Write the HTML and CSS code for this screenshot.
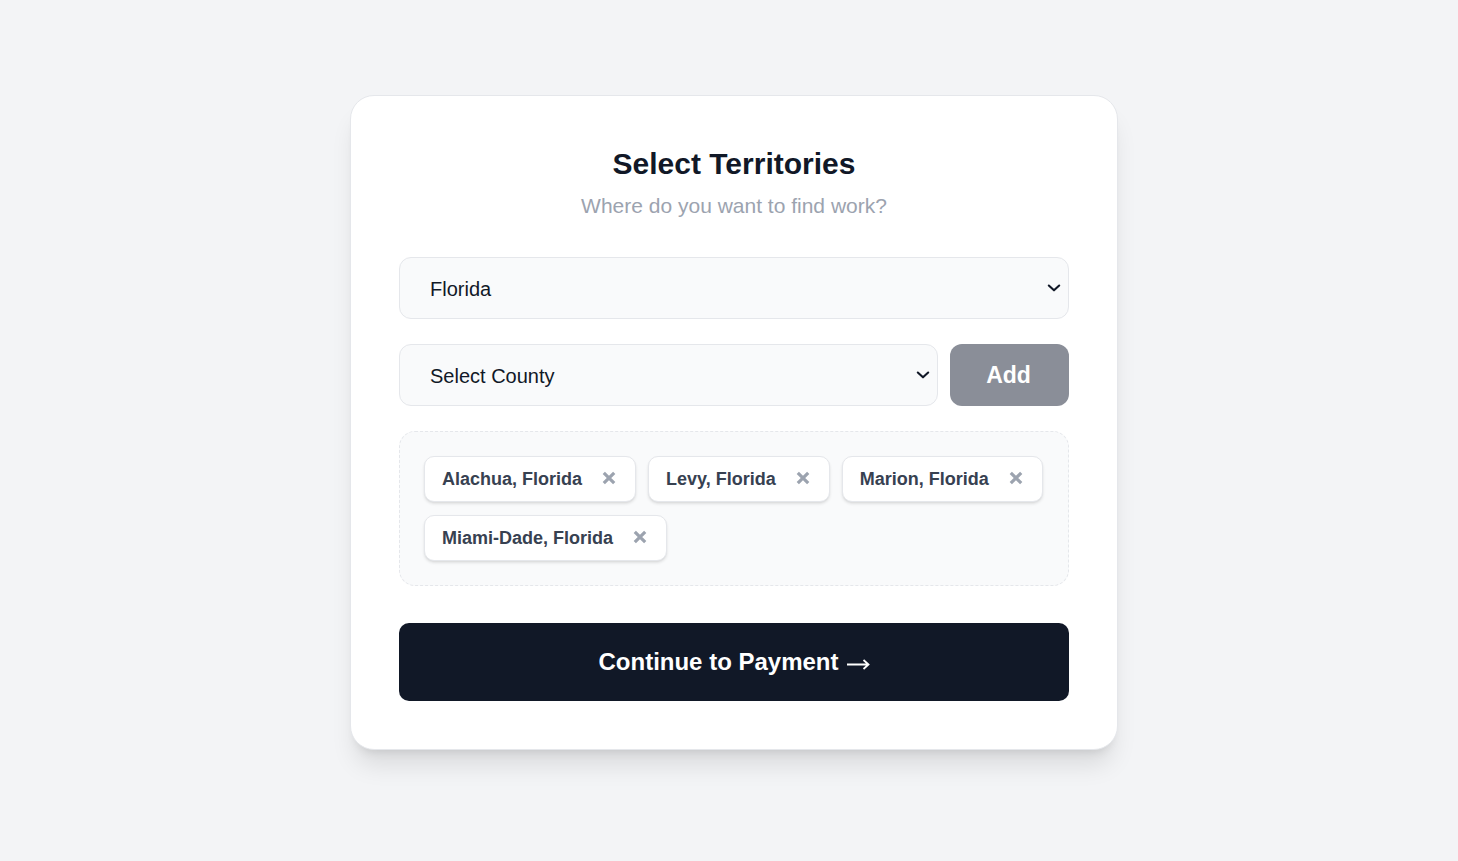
FILE: index.html
```html
<!DOCTYPE html>
<html lang="en">
<head>
<meta charset="utf-8">
<title>Select Territories</title>
<link rel="stylesheet" href="styles.css">
</head>
<body>
<main class="page">
  <section class="card">
    <header class="head">
      <h1 class="title">Select Territories</h1>
      <p class="subtitle">Where do you want to find work?</p>
    </header>

    <div class="field field-state">
      <span class="field-value">Florida</span>
      <svg class="chev" width="14" height="8" viewBox="0 0 14 8"><path d="M1.8 1.5 L7 6.3 L12.2 1.5" fill="none" stroke="#111827" stroke-width="2.1" stroke-linecap="round" stroke-linejoin="round"/></svg>
    </div>

    <div class="row">
      <div class="field field-county">
        <span class="field-value">Select County</span>
        <svg class="chev" width="14" height="8" viewBox="0 0 14 8"><path d="M1.8 1.5 L7 6.3 L12.2 1.5" fill="none" stroke="#111827" stroke-width="2.1" stroke-linecap="round" stroke-linejoin="round"/></svg>
      </div>
      <button class="add-btn" type="button">Add</button>
    </div>

    <div class="tags">
      <div class="tag"><span class="tag-text">Alachua, Florida</span><svg class="x" width="14" height="14" viewBox="0 0 14 14"><path d="M1.8 1.8 L12.2 12.2 M12.2 1.8 L1.8 12.2" stroke="#9ca3af" stroke-width="3.2"/></svg></div>
      <div class="tag"><span class="tag-text">Levy, Florida</span><svg class="x" width="14" height="14" viewBox="0 0 14 14"><path d="M1.8 1.8 L12.2 12.2 M12.2 1.8 L1.8 12.2" stroke="#9ca3af" stroke-width="3.2"/></svg></div>
      <div class="tag"><span class="tag-text">Marion, Florida</span><svg class="x" width="14" height="14" viewBox="0 0 14 14"><path d="M1.8 1.8 L12.2 12.2 M12.2 1.8 L1.8 12.2" stroke="#9ca3af" stroke-width="3.2"/></svg></div>
      <div class="tag"><span class="tag-text">Miami-Dade, Florida</span><svg class="x" width="14" height="14" viewBox="0 0 14 14"><path d="M1.8 1.8 L12.2 12.2 M12.2 1.8 L1.8 12.2" stroke="#9ca3af" stroke-width="3.2"/></svg></div>
    </div>

    <button class="continue" type="button"><span class="continue-label">Continue to Payment</span><svg class="arrow" width="24" height="12" viewBox="0 0 24 12"><path d="M1 6.5 H22.5 M17.5 2 L22.5 6.5 L17.5 11" fill="none" stroke="#ffffff" stroke-width="1.8" stroke-linejoin="miter"/></svg></button>
  </section>
</main>
</body>
</html>
```

FILE: styles.css
```css
* { box-sizing: border-box; }

html, body {
  margin: 0;
  padding: 0;
  background: #f3f4f6;
  font-family: "Liberation Sans", Arial, sans-serif;
  color: #111827;
}

.page {
  min-height: 861px;
  display: flex;
  justify-content: center;
  align-items: flex-start;
  padding: 95px 0 0 10px;
}

.card {
  width: 768px;
  background: #ffffff;
  border: 1px solid #e5e7eb;
  border-radius: 24px;
  padding: 48px;
  box-shadow: 0 20px 25px -5px rgba(0, 0, 0, 0.1), 0 8px 10px -6px rgba(0, 0, 0, 0.1);
}

.head {
  text-align: center;
  padding-top: 2px;
  margin-bottom: 37px;
}

.title {
  margin: 0;
  font-size: 30px;
  line-height: 36px;
  font-weight: 700;
  color: #111827;
}

.subtitle {
  margin: 10px 0 0;
  font-size: 21px;
  line-height: 28px;
  color: #9ca3af;
}

.field {
  height: 62px;
  display: flex;
  align-items: center;
  justify-content: space-between;
  padding: 0 7px 0 30px;
  background: #f9fafb;
  border: 1px solid #e5e7eb;
  border-radius: 12px;
  font-size: 20px;
  color: #111827;
}

.field-state {
  margin-bottom: 25px;
}

.field-value {
  line-height: 24px;
  padding-top: 1px;
}

.chev {
  display: block;
}

.row {
  display: flex;
  gap: 12px;
  margin-bottom: 25px;
}

.field-county {
  flex: 1;
}

.add-btn {
  width: 119px;
  height: 62px;
  border: none;
  border-radius: 12px;
  background: #8a8e98;
  color: #ffffff;
  font-family: inherit;
  font-size: 23px;
  font-weight: 700;
  padding: 0 2px 0 0;
}

.tags {
  display: flex;
  flex-wrap: wrap;
  gap: 13px 12px;
  padding: 24px;
  background: #f9fafb;
  border: 1px dashed #e5e7eb;
  border-radius: 16px;
  margin-bottom: 37px;
}

.tag {
  height: 46px;
  display: flex;
  align-items: center;
  gap: 20px;
  padding: 0 19px 0 17px;
  background: #ffffff;
  border: 1px solid #e5e7eb;
  border-radius: 10px;
  box-shadow: 0 2px 3px rgba(0, 0, 0, 0.1), 0 1px 2px -1px rgba(0, 0, 0, 0.1);
}

.tag-text {
  font-size: 18px;
  font-weight: 700;
  color: #374151;
  line-height: 22px;
}

.x {
  display: block;
  margin-top: -2px;
}

.continue {
  display: flex;
  align-items: center;
  justify-content: center;
  gap: 7px;
  width: 100%;
  height: 78px;
  border: none;
  border-radius: 10px;
  background: #111827;
  color: #ffffff;
  font-family: inherit;
  font-size: 24px;
  font-weight: 700;
  padding: 0;
}

.continue-label {
  line-height: 28px;
}

.arrow {
  display: block;
  margin-top: 3px;
}
```
